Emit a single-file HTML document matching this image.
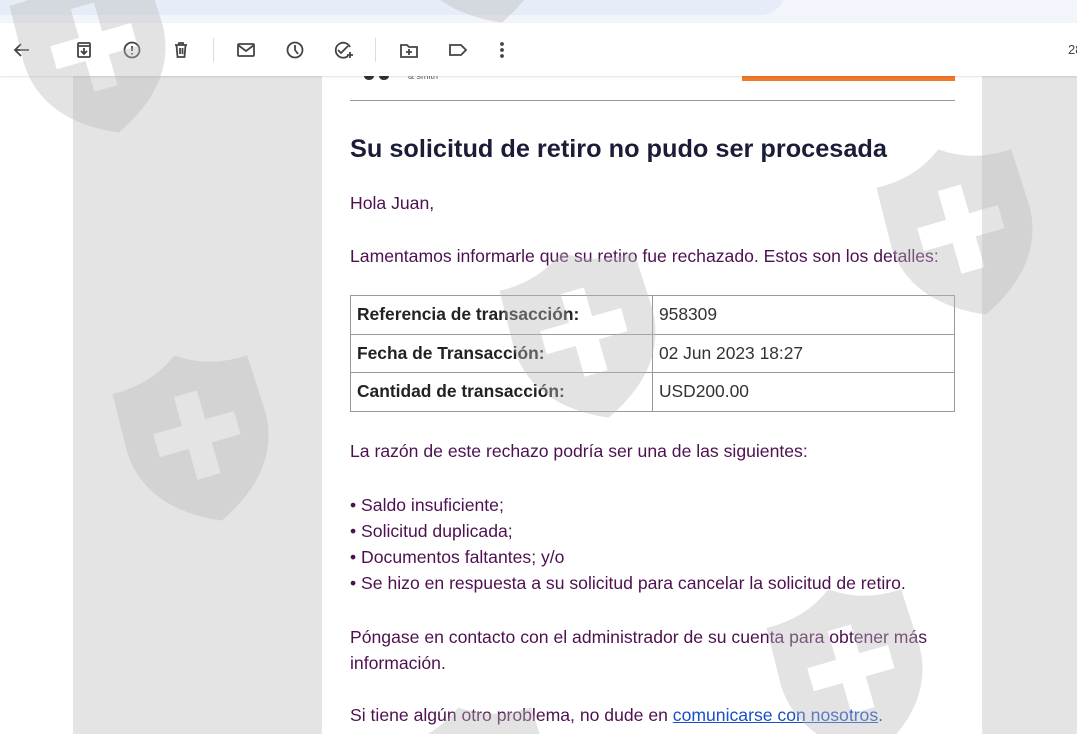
<!DOCTYPE html>
<html><head><meta charset="utf-8"><style>
*{margin:0;padding:0;box-sizing:border-box}
html,body{width:1077px;height:734px;overflow:hidden}
body{position:relative;background:#fff;font-family:"Liberation Sans",Arial,sans-serif}
.top{position:absolute;left:0;top:0;width:1077px;height:23px;background:#f2f6fc;overflow:hidden}
.search{position:absolute;left:-20px;top:-30px;width:805px;height:45px;background:#e6edf9;border-radius:0 0 24px 0}
.toolbar{position:absolute;left:0;top:23px;width:1077px;height:53px;background:#fff;box-shadow:0 1px 2px rgba(0,0,0,.12);z-index:2}
.gray{position:absolute;top:76px;height:658px;background:#e4e4e4}
.mail{position:absolute;left:322px;top:76px;width:660px;height:658px;background:#fff}
.p{position:absolute;left:350px;font-size:17.6px;color:#4d1150;white-space:nowrap}
h1{position:absolute;left:350px;top:135px;font-size:25.3px;font-weight:bold;color:#1b1d38;white-space:nowrap}
table{position:absolute;left:350px;top:295px;width:605px;border-collapse:collapse;font-size:17.4px}
td{border:1px solid #999;height:38.5px;padding:0 6px}
td.l{font-weight:bold;color:#222;width:302px}
td.v{color:#333}
a{color:#1a4fc8}
.ic{position:absolute;z-index:3}
.wm{position:absolute;left:0;top:0;z-index:5;pointer-events:none}
</style></head><body>
<div class="top"><div class="search"></div></div>
<div class="toolbar">
<div style="position:absolute;left:1068px;top:19px;font-size:13px;color:#444">28</div>
<div style="position:absolute;left:213px;top:15px;width:1px;height:24px;background:#ddd"></div>
<div style="position:absolute;left:375px;top:15px;width:1px;height:24px;background:#ddd"></div>
</div>
<svg class="ic" style="left:0;top:37px" width="520" height="26" viewBox="0 0 520 26" fill="none" stroke="#444" stroke-width="1.8">
<path d="M29 13H15M21 7l-6 6 6 6"/>
<rect x="78" y="6" width="12" height="14" rx="1"/><path d="M78 9h12M84 11v6M81 14l3 3 3-3"/>
<circle cx="132" cy="13" r="7.5"/><path d="M132 9v5M132 16v1.5"/>
<path d="M175 8h12M179 8V6h4v2M176.5 8l1 12h7l1-12M180 11v6M182.5 11v6"/>
<rect x="238" y="7" width="16" height="12" rx="1"/><path d="M238 8l8 6 8-6"/>
<circle cx="295" cy="13" r="7.5"/><path d="M295 8v5l3 4"/>
<path d="M350 10a7.5 7.5 0 1 0-2 9"/><path d="M338 13l3 3 7-7M347 18h6M350 15v6"/>
<path d="M401 8h6l2 2h8v10h-16z"/><path d="M409 12v6M406 15h6"/>
<path d="M450 8h11l5 5-5 5h-11z"/>
<circle cx="502" cy="7" r="1" fill="#444"/><circle cx="502" cy="13" r="1" fill="#444"/><circle cx="502" cy="19" r="1" fill="#444"/>
</svg>
<div class="gray" style="left:73px;width:249px"></div>
<div class="gray" style="left:982px;width:95px"></div>
<div class="mail"></div>
<div style="position:absolute;left:364px;top:72px;width:10px;height:8px;border-radius:50%;background:#333"></div>
<div style="position:absolute;left:379px;top:72px;width:10px;height:8px;border-radius:50%;background:#333"></div>
<div style="position:absolute;left:408px;top:71px;font-size:9px;color:#666">&amp; smith</div>
<div style="position:absolute;left:742px;top:76px;width:213px;height:5px;background:#f47a2a"></div>
<div style="position:absolute;left:350px;top:100px;width:605px;height:1px;background:#999"></div>
<h1>Su solicitud de retiro no pudo ser procesada</h1>
<div class="p" style="top:193px">Hola Juan,</div>
<div class="p" style="top:246px">Lamentamos informarle que su retiro fue rechazado. Estos son los detalles:</div>
<table>
<tr><td class="l">Referencia de transacción:</td><td class="v">958309</td></tr>
<tr><td class="l">Fecha de Transacción:</td><td class="v">02 Jun 2023 18:27</td></tr>
<tr><td class="l">Cantidad de transacción:</td><td class="v">USD200.00</td></tr>
</table>
<div class="p" style="top:441px">La razón de este rechazo podría ser una de las siguientes:</div>
<div class="p" style="top:492px;line-height:26px">• Saldo insuficiente;<br>• Solicitud duplicada;<br>• Documentos faltantes; y/o<br>• Se hizo en respuesta a su solicitud para cancelar la solicitud de retiro.</div>
<div class="p" style="top:624px;line-height:26px">Póngase en contacto con el administrador de su cuenta para obtener más<br>información.</div>
<div class="p" style="top:705px">Si tiene algún otro problema, no dude en <a href="#">comunicarse con nosotros</a>.</div>
<svg class="wm" width="1077" height="734" viewBox="0 0 1077 734">
<defs><path id="s" fill-rule="evenodd" d="M70 0Q100 22 140 20L142 80Q140 140 70 172Q0 140-2 80L0 20Q40 22 70 0ZM58 40h24v30h30v24h-30v32h-24v-32h-30v-24h30z"/></defs>
<g fill="#b8b8b8" fill-opacity="0.4">
<use href="#s" transform="translate(95,50) rotate(-16) translate(-70,-86)"/>
<use href="#s" transform="translate(198,438) rotate(-16) translate(-70,-86)"/>
<use href="#s" transform="translate(478,-60) rotate(-16) translate(-70,-86)"/>
<use href="#s" transform="translate(962,232) rotate(-16) translate(-70,-86)"/>
<use href="#s" transform="translate(585,335) rotate(-16) translate(-70,-86)"/>
<use href="#s" transform="translate(852,672) rotate(-16) translate(-70,-86)"/>
<use href="#s" transform="translate(482,790) rotate(-16) translate(-70,-86)"/>
</g></svg>
</body></html>
